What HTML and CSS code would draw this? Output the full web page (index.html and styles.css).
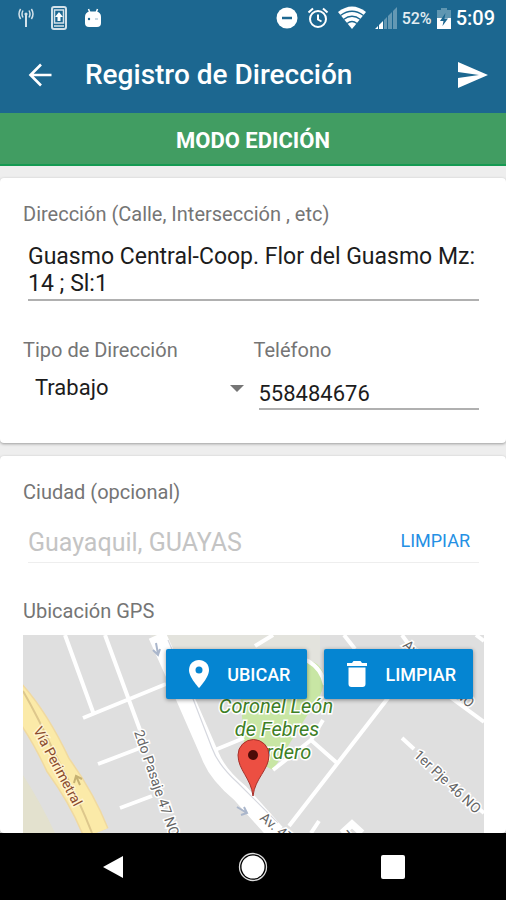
FILE: index.html
```html
<!DOCTYPE html>
<html lang="es">
<head>
<meta charset="utf-8">
<meta name="viewport" content="width=device-width, initial-scale=1">
<title>Registro de Dirección</title>
<link rel="stylesheet" href="styles.css">
</head>
<body>
<header class="top">
  <div class="status">
    <div class="status-left">
      <svg width="16" height="20" viewBox="0 0 16 20" fill="none" stroke="#d3e2ea" stroke-width="1.5"><path d="M8 7v12" stroke-width="2"/><circle cx="8" cy="6" r="1.6" fill="#d3e2ea" stroke="none"/><path d="M5 2.500q-2 3.500 0 7M11 2.500q2 3.500 0 7M2.600 1q-3.200 5 0 10M13.400 1q3.200 5 0 10"/></svg>
      <svg width="16" height="24" viewBox="0 0 16 24"><rect x="1" y="1" width="14" height="22" rx="2" fill="none" stroke="#d3e2ea" stroke-width="2"/><rect x="3.500" y="4" width="9" height="13" fill="none" stroke="#d3e2ea" stroke-width="1.500"/><path d="M8 6l4 5H9.500v4h-3v-4H4z" fill="#fff"/><path d="M3 19h10v2H3z" fill="#a9c5d3"/></svg>
      <svg width="18" height="20" viewBox="0 0 18 20"><path d="M4.500 1l1.500 4M13.500 1L12 5" stroke="#fff" stroke-width="1.500"/><path d="M1 9q0-5 5-5.500h6q5 .5 5 5.500v6q0 4-4 4H5q-4 0-4-4z" fill="#fff"/><circle cx="5" cy="11" r="1.200" fill="#1c6790"/><path d="M11 11h3" stroke="#8fb3c8"/></svg>
    </div>
    <div class="status-right">
      <svg width="22" height="22" viewBox="0 0 22 22"><circle cx="11" cy="11" r="10.500" fill="#fff"/><path d="M6 11h10" stroke="#1c6790" stroke-width="2.500"/></svg>
      <svg width="22" height="22" viewBox="0 0 22 22" fill="none" stroke="#fff" stroke-width="2"><circle cx="11" cy="12" r="8"/><path d="M11 7.500V12.500l3.500 2M1.500 5.500L6 1.500M20.500 5.500L16 1.500"/></svg>
      <svg width="28" height="24" viewBox="0 0 28 24"><path d="M14 23L0 6q14-11 28 0z" fill="#fff"/><path d="M2.500 9.500Q14 1 25.500 9.500M5.500 13.500q8.500-6.500 17 0M9 17.500q5-4 10 0" fill="none" stroke="#1c6790" stroke-width="1.300"/></svg>
      <svg width="22" height="22" viewBox="0 0 22 22"><path d="M0 22l3-3v3zM4 18l4-4v8H4z" fill="#fff"/><path d="M9 13l3-3v12H9zM13 9l4-4v17h-4zM18 4l4-4v22h-4z" fill="#6498b3"/></svg>
      <span class="percent">52%</span>
      <svg width="14" height="21" viewBox="0 0 14 21"><path d="M4 0h6v2h4v9H0V2h4z" fill="#5f96b1"/><path d="M0 10h14v11H0z" fill="#fff"/><path d="M8.500 5L3 13h3.500L5.500 18 11 10.500H7.500z" fill="#1c6790"/></svg>
      <span class="clock">5:09</span>
    </div>
  </div>
  <div class="bar">
    <button class="icon-button" type="button" aria-label="Volver"><svg width="24" height="24" viewBox="0 0 24 24" fill="none" stroke="#fff" stroke-width="2.600"><path d="M23.500 12H3M13 1.500L2.500 12 13 22.500"/></svg></button>
    <h1 class="title">Registro de Dirección</h1>
    <button class="icon-button" type="button" aria-label="Enviar"><svg width="30" height="26" viewBox="0 0 30 26"><path d="M0 0l30 13L0 26V16l21-3L0 10z" fill="#fff"/></svg></button>
  </div>
</header>
<div class="mode">MODO EDICIÓN</div>
<main class="content">
  <section class="card">
    <label class="label" for="dir">Dirección (Calle, Intersección , etc)</label>
    <textarea class="field address" id="dir" rows="2" spellcheck="false">Guasmo Central-Coop. Flor del Guasmo Mz: 14 ; Sl:1</textarea>
    <div class="columns">
      <div class="column">
        <label class="label" for="tipo">Tipo de Dirección</label>
        <div class="select-wrap">
          <select class="select" id="tipo"><option>Trabajo</option></select>
          <svg width="14" height="7" viewBox="0 0 14 7"><path d="M0 0h14L7 7z" fill="#757575"/></svg>
        </div>
      </div>
      <div class="column">
        <label class="label" for="tel">Teléfono</label>
        <input class="field phone" id="tel" type="tel" value="558484676">
      </div>
    </div>
  </section>
  <section class="card card-map">
    <label class="label" for="ciudad">Ciudad (opcional)</label>
    <div class="city-row">
      <input class="city" id="ciudad" type="text" placeholder="Guayaquil, GUAYAS">
      <button class="clear" type="button">LIMPIAR</button>
    </div>
    <h2 class="label">Ubicación GPS</h2>
    <div class="map">
      <svg class="map-art" viewBox="23 635 461 198" preserveAspectRatio="xMidYMin slice">
        <path d="M23 635h461v198H23z" fill="#dfdfdf"/>
        <path d="M150 635h170v50H200z" fill="#e3e3dd"/>
        <path d="M23 775q18 28 32 58H23z" fill="#e3e1ce"/>
        <path d="M240 690l66-30q18 2 18 22-3 18-16 32l-35 56-28-14z" fill="#c8e6a4"/>
        <g fill="none" stroke="#fff" stroke-width="4">
          <path d="M65 635L93 712M105 635L140 730M83 718L166 684M98 764l42-16M120 808l32-12M210 752l34-14M255 646l18-11M261 655q30-2 47 6 14 8 17 24M344 635l11 14M402 635l10 14M476 635l8 6M388 698L289 826M273 770l38-30 26 23M311 740l12-20M450 697l34 25M402 738l12 11M478 808l6 5M311 833l8-12"/>
          <path d="M342 833l10-9 10 9" stroke="#fff" stroke-width="7"/>
        </g>
        <path d="M157 635L175 675 210 755Q217 774 240 793L276 833" fill="none" stroke="#fff" stroke-width="18"/>
        <path d="M168 640L190 691 212 748Q218 765 238 783L278 823" fill="none" stroke="#d6d8df" stroke-width="1.200"/>
        <path d="M10 690Q36 718 58 765Q82 798 96 833" fill="none" stroke="#f0d9a0" stroke-width="27"/>
        <path d="M10 690Q36 718 58 765Q82 798 96 833" fill="none" stroke="#fbeaa8" stroke-width="24"/>
        <path d="M23 691Q38 717 54 752Q78 797 92 833" fill="none" stroke="#ddc78c" stroke-width="2"/>
        <g fill="none" stroke="#aab6cb" stroke-width="2"><path d="M156 643l2 11M153 650l5 5 2-6M237 807l10 6M241 815l6-2-3-6"/></g>
        <path d="M80 785l-4-9M74 783l2-7 6 3" fill="none" stroke="#c6b172" stroke-width="2"/>
        <g class="street">
          <text transform="translate(134 732) rotate(71)">2do Pasaje 47 NO</text>
          <text transform="translate(413 756) rotate(43)">1er Pje 46 NO</text>
          <text transform="translate(259 819) rotate(40)">Av. 47</text>
          <text transform="translate(402 646) rotate(43)">Av. Tercera NO</text>
          <text transform="translate(347 843) rotate(-40)">H</text>
        </g>
        <text class="highway" transform="translate(33 730) rotate(62)">Vía Perimetral</text>
        <g class="park" text-anchor="middle"><text x="276" y="713">Coronel León</text><text x="277" y="736">de Febres</text><text x="277" y="759">Cordero</text></g>
        <path d="M253 796c-2-18-15-26-15-41a15.500 15.500 0 0 1 31 0c0 15-14 23-16 41z" fill="#ec4f42" stroke="#a5312b"/>
        <circle cx="253" cy="755" r="5" fill="#4c0b08"/>
      </svg>
      <div class="map-actions">
        <button class="map-button" type="button"><svg width="24" height="30" viewBox="0 0 24 30"><path d="M12 1C6.300 1 2 5.300 2 11c0 7.500 10 18 10 18s10-10.500 10-18C22 5.300 17.700 1 12 1z" fill="#fff"/><circle cx="12" cy="11" r="3.500" fill="#0585d2"/></svg>UBICAR</button>
        <button class="map-button" type="button"><svg width="24" height="30" viewBox="0 0 24 30"><path d="M2 4h5l1.500-2h7L17 4h5v3H2zM3.500 8.500h17V25q0 3-3 3h-11q-3 0-3-3z" fill="#fff"/></svg>LIMPIAR</button>
      </div>
    </div>
  </section>
</main>
<nav class="nav">
  <button class="icon-button" type="button" aria-label="Atrás"><svg width="30" height="30" viewBox="0 0 30 30"><path d="M5 15L25 4v22z" fill="#fff"/></svg></button>
  <button class="icon-button" type="button" aria-label="Inicio"><svg width="30" height="30" viewBox="0 0 30 30"><circle cx="15" cy="15" r="11.500" fill="#fff"/><circle cx="15" cy="15" r="13.500" fill="none" stroke="#ddd" stroke-width="1.300"/></svg></button>
  <button class="icon-button" type="button" aria-label="Recientes"><svg width="30" height="30" viewBox="0 0 30 30"><rect x="3" y="3" width="24" height="24" rx="2" fill="#fff"/></svg></button>
</nav>
</body>
</html>
```
FILE: styles.css
```css
* { box-sizing: border-box; }
body {
  margin: 0;
  height: 100vh;
  display: flex;
  flex-direction: column;
  overflow: hidden;
  background: #eeeeee;
  font-family: Roboto, "Liberation Sans", sans-serif;
  color: #1c1c1c;
}
button, input, select, textarea { font: inherit; color: inherit; border: 0; border-radius: 0; background: none; padding: 0; margin: 0; outline: 0; }
svg { display: block; flex: none; }

.top { background: #1c6790; color: #fff; flex: none; }
.status { height: 36px; padding: 0 11px 0 18px; display: flex; align-items: center; justify-content: space-between; }
.status-left { display: flex; align-items: center; gap: 17px; }
.status-right { display: flex; align-items: center; gap: 9px; }
.percent { font-size: 16px; font-weight: 500; margin: 0 -4px 0 -4px; color: #e3edf2; }
.clock { font-size: 20px; font-weight: 500; margin-left: -4px; }
.bar { height: 77px; padding: 0 18px 0 28px; display: flex; align-items: center; }
.icon-button { display: flex; cursor: pointer; }
.title { flex: 1; margin: 0 0 0 33px; font-size: 28px; font-weight: 500; line-height: 32px; }

.mode { flex: none; height: 53px; border-bottom: 2px solid #159a52; background: #419d62; color: #fff; font-size: 22px; font-weight: 700; line-height: 55px; text-align: center; }

.content { flex: 1; min-height: 0; display: flex; flex-direction: column; gap: 13px; padding-top: 12px; overflow: hidden; }
.card { flex: none; padding: 24px 22px 33px 23px; background: #fff; border-radius: 4px; box-shadow: 0 1px 3px rgba(0, 0, 0, 0.35); }
.card-map { flex: 1; min-height: 0; display: flex; flex-direction: column; padding-bottom: 0; }
.label { display: block; margin: 0; font-size: 20px; font-weight: 400; line-height: 24px; color: #757575; }
.field { display: block; width: calc(100% - 10px); margin: 0 5px; border-bottom: 2px solid #b0b0b0; font-size: 22px; line-height: 27px; }
.address { height: 58px; margin-top: 17px; resize: none; overflow: hidden; font-size: 23px; }
.columns { display: grid; grid-template-columns: 1fr 1fr; margin-top: 37px; }
.phone { height: 31px; margin-top: 17px; }
.select-wrap { display: grid; align-items: center; margin: 12px 10px 0 12px; }
.select-wrap > * { grid-area: 1 / 1; }
.select-wrap svg { justify-self: end; pointer-events: none; }
.select { appearance: none; width: 100%; height: 28px; font-size: 22px; line-height: 28px; }

.city-row { display: flex; align-items: center; height: 40px; margin: 19px 5px 36px; border-bottom: 1px solid #eeeeee; }
.city { flex: 1; min-width: 0; font-size: 25px; height: 30px; line-height: 30px; }
.city::placeholder { color: #c4c4c4; opacity: 1; }
.clear { padding: 0 9px 4px; color: #2490e4; font-size: 18px; }

.map { position: relative; flex: 1; min-height: 0; margin-top: 12px; overflow: hidden; }
.map-art { width: 100%; height: 100%; }
.map-actions { position: absolute; top: 14px; right: 11px; display: flex; gap: 17px; }
.map-button { display: flex; align-items: center; gap: 16px; height: 50px; padding: 0 17px 0 21px; border-radius: 2px; background: #0585d2; box-shadow: 0 1px 4px rgba(0, 0, 0, 0.4); color: #fff; font-size: 18px; font-weight: 500; cursor: pointer; }
.street text { font-size: 14px; fill: #666; stroke: #fff; stroke-width: 3px; paint-order: stroke; }
.highway { font-size: 14px; fill: #8a4a2c; stroke: #fff3cf; stroke-width: 3px; paint-order: stroke; }
.park text { font-size: 20px; font-style: italic; fill: #3e8026; stroke: #fff; stroke-width: 3px; paint-order: stroke; }

.nav { flex: none; height: 67px; padding: 0 98px; display: flex; align-items: center; justify-content: space-between; background: #000; }
```
